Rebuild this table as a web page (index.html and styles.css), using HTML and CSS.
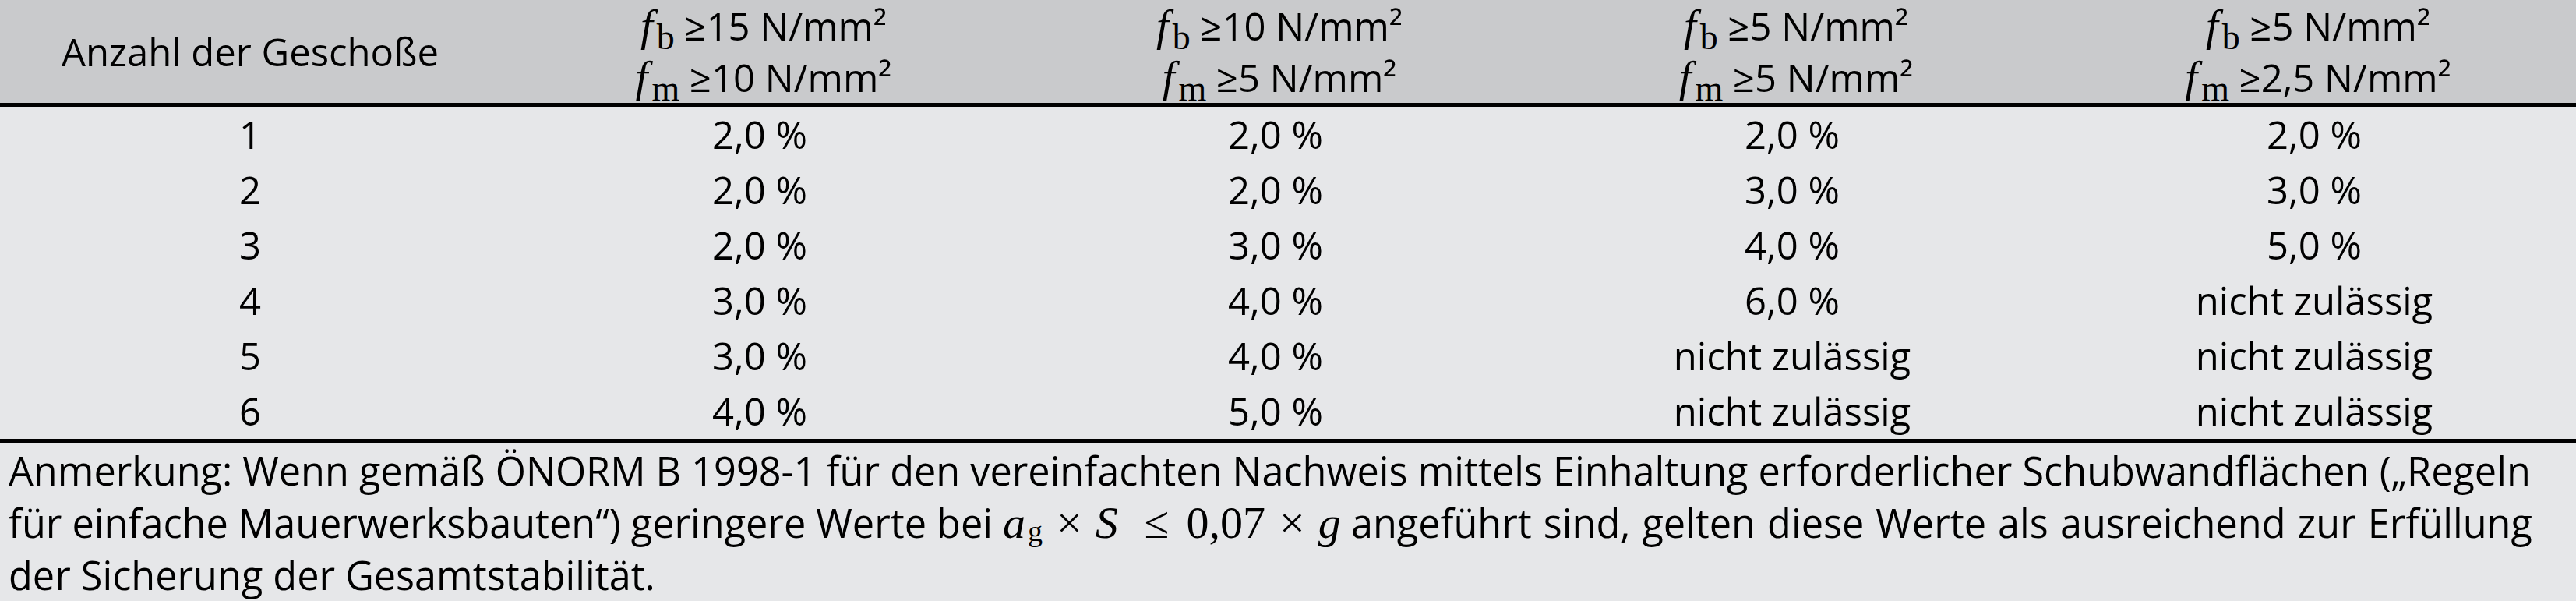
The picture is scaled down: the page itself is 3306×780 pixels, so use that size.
FILE: index.html
```html
<!DOCTYPE html>
<html lang="de">
<head>
<meta charset="utf-8">
<title>Anzahl der Geschoße</title>
<link rel="stylesheet" href="styles.css">
</head>
<body>
<div class="page">
  <div class="head row">
    <div class="cell single">Anzahl der Geschoße</div>
    <div class="cell">
      <span class="ln"><span class="hf">f</span><span class="hs">b</span> ≥15 N/mm²</span>
      <span class="ln"><span class="hf">f</span><span class="hs">m</span> ≥10 N/mm²</span>
    </div>
    <div class="cell">
      <span class="ln"><span class="hf">f</span><span class="hs">b</span> ≥10 N/mm²</span>
      <span class="ln"><span class="hf">f</span><span class="hs">m</span> ≥5 N/mm²</span>
    </div>
    <div class="cell">
      <span class="ln"><span class="hf">f</span><span class="hs">b</span> ≥5 N/mm²</span>
      <span class="ln"><span class="hf">f</span><span class="hs">m</span> ≥5 N/mm²</span>
    </div>
    <div class="cell">
      <span class="ln"><span class="hf">f</span><span class="hs">b</span> ≥5 N/mm²</span>
      <span class="ln"><span class="hf">f</span><span class="hs">m</span> ≥2,5 N/mm²</span>
    </div>
  </div>
  <div class="body">
    <div class="row"><div class="cell">1</div><div class="cell">2,0 %</div><div class="cell">2,0 %</div><div class="cell">2,0 %</div><div class="cell">2,0 %</div></div>
    <div class="row"><div class="cell">2</div><div class="cell">2,0 %</div><div class="cell">2,0 %</div><div class="cell">3,0 %</div><div class="cell">3,0 %</div></div>
    <div class="row"><div class="cell">3</div><div class="cell">2,0 %</div><div class="cell">3,0 %</div><div class="cell">4,0 %</div><div class="cell">5,0 %</div></div>
    <div class="row"><div class="cell">4</div><div class="cell">3,0 %</div><div class="cell">4,0 %</div><div class="cell">6,0 %</div><div class="cell">nicht zulässig</div></div>
    <div class="row"><div class="cell">5</div><div class="cell">3,0 %</div><div class="cell">4,0 %</div><div class="cell">nicht zulässig</div><div class="cell">nicht zulässig</div></div>
    <div class="row"><div class="cell">6</div><div class="cell">4,0 %</div><div class="cell">5,0 %</div><div class="cell">nicht zulässig</div><div class="cell">nicht zulässig</div></div>
  </div>
  <div class="note">
    <span class="nl">Anmerkung: Wenn gemäß ÖNORM B 1998-1 für den vereinfachten Nachweis mittels Einhaltung erforderlicher Schubwandflächen („Regeln</span>
    <span class="nl">für einfache Mauerwerksbauten“) geringere Werte bei <span class="m"><span class="mi">a</span><span class="msub">g</span><span class="mo">×</span><span class="mi s">S</span><span class="mo le">≤</span><span class="mn">0,07</span><span class="mo">×</span><span class="mi g">g</span></span> <span class="tail">angeführt sind, gelten diese Werte als ausreichend zur Erfüllung</span></span>
    <span class="nl">der Sicherung der Gesamtstabilität.</span>
  </div>
</div>
</body>
</html>
```

FILE: styles.css
```css
html, body {
  margin: 0;
  padding: 0;
  background: #ffffff;
}

body {
  font-family: "Open Sans", "Noto Sans", "DejaVu Sans", sans-serif;
  color: #000000;
}

.page {
  width: 3306px;
}

.row {
  display: grid;
  grid-template-columns: 642px 666px 658px 668px 672px;
}

.cell {
  text-align: center;
  white-space: nowrap;
}

/* header */
.head {
  background: #c9cacc;
  height: 132px;
  border-bottom: 5px solid #000000;
  font-size: 49px;
  line-height: 66px;
}

.head .cell {
  display: flex;
  flex-direction: column;
  justify-content: center;
  align-items: center;
}

.ln {
  display: block;
  height: 66px;
}

.hf {
  font-family: "Liberation Serif", "DejaVu Serif", serif;
  font-style: italic;
  font-size: 57px;
  line-height: 0;
  margin: 0 5px 0 10px;
}

.hs {
  font-family: "Liberation Serif", "DejaVu Serif", serif;
  font-size: 46px;
  line-height: 0;
  vertical-align: -11px;
}

/* body rows */
.body {
  background: #e6e7e9;
  border-bottom: 5px solid #000000;
}

.body .row {
  height: 71px;
  font-size: 49px;
  line-height: 71px;
}

/* note */
.note {
  background: #e6e7e9;
  height: 201px;
  padding: 2px 0 0 11px;
  font-size: 50.4px;
  line-height: 67px;
}

.nl {
  display: block;
  white-space: nowrap;
}

.tail {
  word-spacing: 2px;
}

.m {
  font-family: "Liberation Serif", "DejaVu Serif", serif;
  font-size: 58px;
  line-height: 0;
}

.mi {
  font-style: italic;
}

.msub {
  font-size: 38px;
  vertical-align: -4px;
  margin-left: 3px;
}

.mo {
  margin: 0 17px 0 18px;
}

.mo.le {
  margin: 0 22px 0 34px;
}

.mi.g {
  margin-left: 0;
}
```
